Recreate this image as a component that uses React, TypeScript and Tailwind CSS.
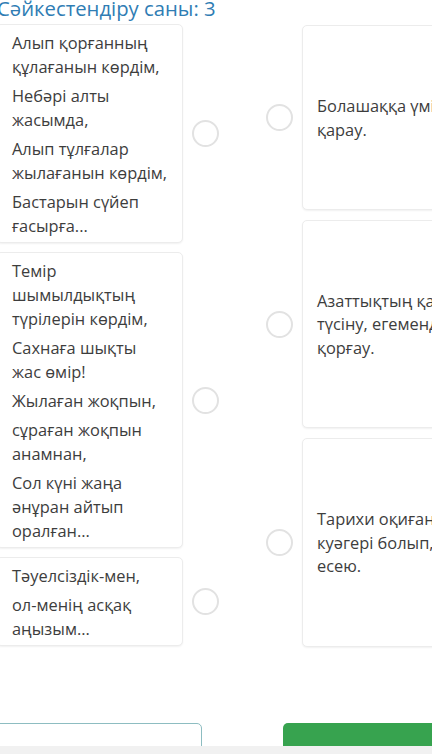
import React from "react";

const leftCards: string[][][] = [
  [
    ["Алып қорғанның", "құлағанын көрдім,"],
    ["Небәрі алты", "жасымда,"],
    ["Алып тұлғалар", "жылағанын көрдім,"],
    ["Бастарын сүйеп", "ғасырға..."],
  ],
  [
    ["Темір", "шымылдықтың", "түрілерін көрдім,"],
    ["Сахнаға шықты", "жас өмір!"],
    ["Жылаған жоқпын,"],
    ["сұраған жоқпын", "анамнан,"],
    ["Сол күні жаңа", "әнұран айтып", "оралған..."],
  ],
  [["Тәуелсіздік-мен,"], ["ол-менің асқақ", "аңызым..."]],
];

const rightCards: { h: string; lines: string[] }[] = [
  { h: "h-[185px]", lines: ["Болашаққа үмітпен", "қарау."] },
  { h: "h-[208px]", lines: ["Азаттықтың қадірін", "түсіну, егемендікті", "қорғау."] },
  { h: "h-[209px]", lines: ["Тарихи оқиғаның", "куәгері болып, өсу,", "есею."] },
];

function Circle() {
  return <div className="w-[27px] h-[27px] shrink-0 rounded-full border-2 border-[#e2e2e2] bg-white" />;
}

export default function App() {
  return (
    <div
      className="relative w-[432px] h-[754px] overflow-hidden bg-white text-[#3d3d3d]"
      style={{ fontFamily: '"Open Sans", "Noto Sans", sans-serif' }}
    >
      <div className="-mt-[5px] -ml-[3px] text-[20.3px] leading-[26px] text-[#2f7db4] whitespace-nowrap">
        Сәйкестендіру саны: 3
      </div>
      <div className="mt-[3px] flex">
        <div className="flex flex-col gap-[9px] -ml-[4px]">
          {leftCards.map((paras, i) => (
            <div key={i} className="flex items-center gap-[9px]">
              <div className="w-[187px] pl-[15px] pr-2 pt-[6px] pb-[4px] flex flex-col gap-[5px] rounded-[5px] border border-[#ececec] bg-white shadow-[0_1px_2px_rgba(0,0,0,0.06)] text-[16.4px] leading-[24px]">
                {paras.map((lines, j) => (
                  <div key={j}>
                    {lines.map((l, k) => (
                      <div key={k} className="whitespace-nowrap">{l}</div>
                    ))}
                  </div>
                ))}
              </div>
              <Circle />
            </div>
          ))}
        </div>
        <div className="ml-[47px] mt-[1px] flex flex-col gap-[10px]">
          {rightCards.map((c, i) => (
            <div key={i} className="flex items-center gap-[9px]">
              <Circle />
              <div
                className={`${c.h} w-[220px] shrink-0 pl-[14px] flex flex-col justify-center rounded-[5px] border border-[#ececec] bg-white shadow-[0_1px_2px_rgba(0,0,0,0.06)] text-[16.4px] leading-[23.5px]`}
              >
                {c.lines.map((l, k) => (
                  <div key={k} className="whitespace-nowrap">{l}</div>
                ))}
              </div>
            </div>
          ))}
        </div>
      </div>
      <div className="mt-[76px] flex">
        <div className="-ml-[8px] w-[210px] h-[40px] shrink-0 rounded-[5px] border-[1.5px] border-[#8dbdc1] bg-white" />
        <div className="ml-[81px] w-[200px] h-[40px] shrink-0 rounded-[5px] bg-[#37a34f]" />
      </div>
      <div className="absolute left-0 right-0 bottom-0 h-[8px] bg-[#f1f1f1]" />
    </div>
  );
}
